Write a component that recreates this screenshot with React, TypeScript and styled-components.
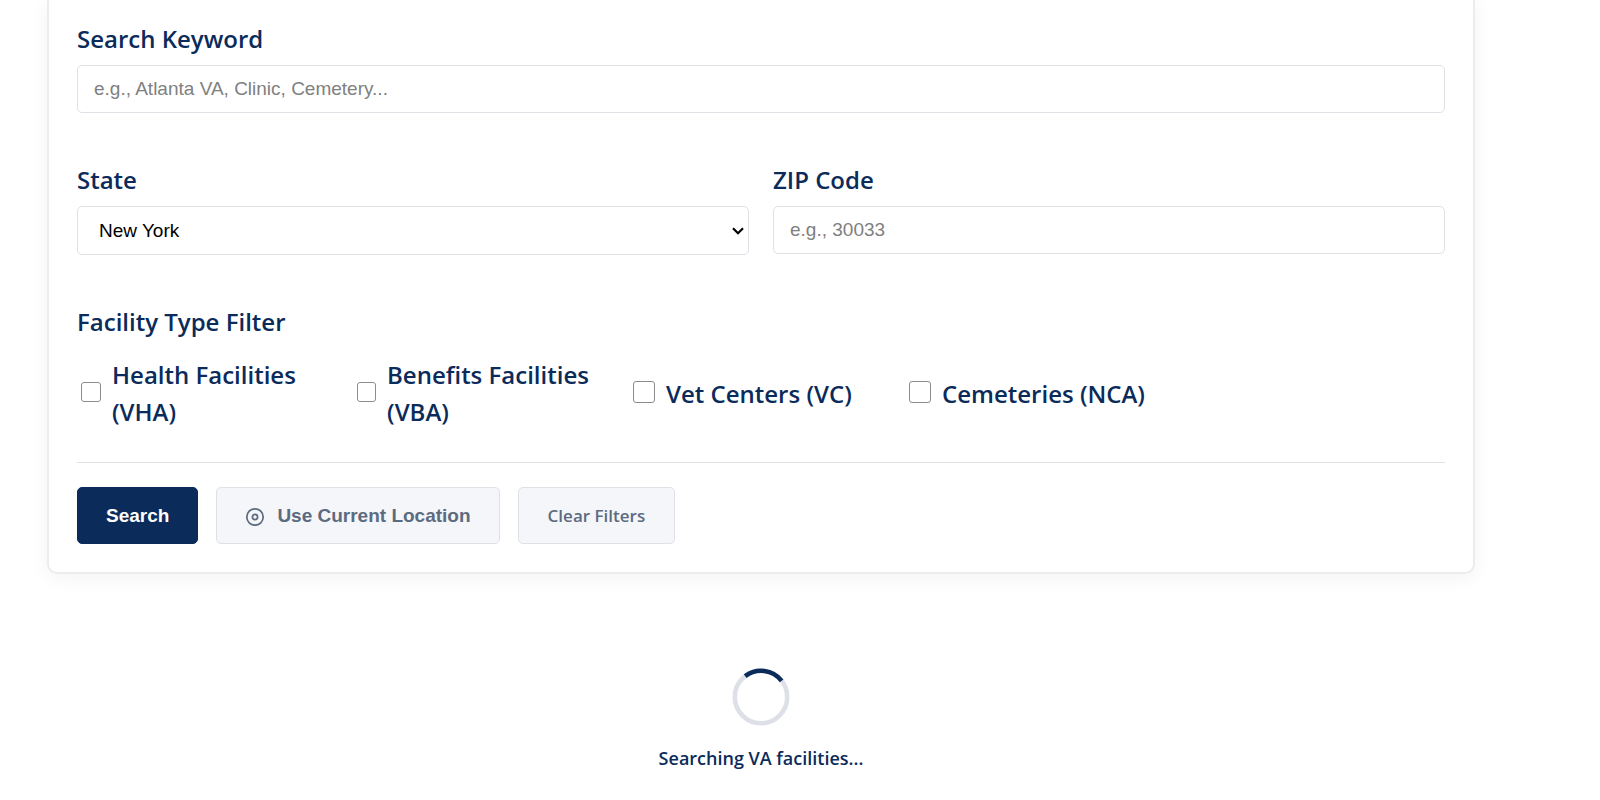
import React from "react";
import styled, { createGlobalStyle } from "styled-components";

const navy = "#0b2b5a";
const line = "#dfe1e7";
const slate = "#5b6b80";
const uiFont = '"Segoe UI", "Open Sans", "Noto Sans", sans-serif';
const controlFont = '"Liberation Sans", Arial, sans-serif';

const GlobalStyle = createGlobalStyle`
  *, *::before, *::after { box-sizing: border-box; }
  body { margin: 0; background: #fff; color: ${navy}; font-family: ${uiFont}; }
`;

const Page = styled.main`
  padding: 0 125px 0 47px;
`;

const SearchCard = styled.form`
  display: flex;
  flex-direction: column;
  padding: 20px 28px 28px;
  border: 2px solid #ececee;
  border-top: 0;
  border-radius: 0 0 10px 10px;
  box-shadow: 0 4px 20px rgba(0, 0, 0, 0.05);
`;

const FieldRow = styled.div`
  display: grid;
  grid-template-columns: repeat(${(p: { $columns: number }) => p.$columns}, minmax(0, 1fr));
  align-items: start;
  gap: 24px;
  margin-bottom: 48px;
`;

const Field = styled.div`
  display: flex;
  flex-direction: column;
  gap: 8px;
`;

const Label = styled.label`
  font-size: 24px;
  font-weight: 600;
  line-height: 37px;
`;

const TextInput = styled.input`
  width: 100%;
  height: 48px;
  padding: 0 16px;
  border: 1px solid ${line};
  border-radius: 5px;
  background: #fff;
  color: #000;
  font: 19px ${controlFont};
  &::placeholder { color: #808080; }
`;

const SelectBox = styled.div`
  position: relative;
`;

const Select = styled.select`
  appearance: none;
  display: block;
  width: 100%;
  height: 49px;
  padding: 0 32px 0 21px;
  border: 1px solid ${line};
  border-radius: 5px;
  background: #fff;
  color: #000;
  font: 19px ${controlFont};
`;

const Chevron = styled.svg`
  position: absolute;
  top: 20px;
  right: 4px;
  pointer-events: none;
`;

const FilterGroup = styled.fieldset`
  margin: 0 0 32px;
  padding: 0;
  border: 0;
  min-width: 0;
`;

const Legend = styled.legend`
  padding: 0;
  margin-bottom: 16px;
  font-size: 24px;
  font-weight: 600;
  line-height: 37px;
`;

const Options = styled.div`
  display: grid;
  grid-template-columns: repeat(auto-fill, minmax(250px, 1fr));
  gap: 12px;
`;

const Option = styled.label`
  display: flex;
  align-items: center;
  gap: 8px;
  font-size: 24px;
  font-weight: 600;
  line-height: 37px;
`;

const Checkbox = styled.input`
  appearance: none;
  width: 22px;
  min-width: 18px;
  aspect-ratio: 1;
  margin: 2px 3px 4px 4px;
  border: 1px solid #8c8c8c;
  border-radius: 3px;
  background: #fff;
  &:checked { background: ${navy}; box-shadow: inset 0 0 0 3px #fff; }
`;

const Actions = styled.div`
  display: flex;
  gap: 18px;
  padding-top: 24px;
  border-top: 1px solid ${line};
`;

const Button = styled.button<{ $primary?: boolean; $plain?: boolean }>`
  display: inline-flex;
  align-items: center;
  gap: 12px;
  height: 57px;
  padding: 0 ${(p) => (p.$plain ? 29 : 28)}px;
  border: 1px solid ${(p) => (p.$primary ? navy : line)};
  border-radius: 5px;
  background: ${(p) => (p.$primary ? navy : "#f5f6f9")};
  color: ${(p) => (p.$primary ? "#fff" : slate)};
  font-family: ${(p) => (p.$plain ? uiFont : controlFont)};
  font-size: ${(p) => (p.$plain ? 17 : 19)}px;
  font-weight: ${(p) => (p.$plain ? 600 : 700)};
  cursor: pointer;
`;

const Status = styled.div`
  display: flex;
  flex-direction: column;
  align-items: center;
  gap: 19px;
  padding: 94px 0 28px;
  font-size: 18px;
  font-weight: 600;
  line-height: 27px;
`;

const facilityTypes = [
  "Health Facilities (VHA)",
  "Benefits Facilities (VBA)",
  "Vet Centers (VC)",
  "Cemeteries (NCA)",
];

const LocationIcon = () => (
  <svg width="20" height="20" viewBox="0 0 20 20" fill="none" stroke="currentColor" aria-hidden="true">
    <circle cx="10" cy="11" r="8.2" strokeWidth="1.7" />
    <circle cx="10" cy="11" r="2.6" strokeWidth="1.7" />
  </svg>
);

const Spinner = () => (
  <svg width="58" height="58" viewBox="0 0 58 58" fill="none" strokeWidth="4.6" aria-hidden="true">
    <circle cx="29" cy="29" r="26.2" stroke="#dde0e6" />
    <path d="M13.2 8.1A26.2 26.2 0 0 1 49.6 12.8" stroke={navy} />
  </svg>
);

export default function App() {
  return (
    <>
      <GlobalStyle />
      <Page>
        <SearchCard onSubmit={(e) => e.preventDefault()}>
          <FieldRow $columns={1}>
            <Field>
              <Label htmlFor="keyword">Search Keyword</Label>
              <TextInput id="keyword" type="text" placeholder="e.g., Atlanta VA, Clinic, Cemetery..." />
            </Field>
          </FieldRow>
          <FieldRow $columns={2}>
            <Field>
              <Label htmlFor="state">State</Label>
              <SelectBox>
                <Select id="state" defaultValue="NY">
                  <option value="NY">New York</option>
                </Select>
                <Chevron width="14" height="10" viewBox="0 0 14 10" fill="none" stroke="#000" strokeWidth="2.2" aria-hidden="true">
                  <path d="M2 2.2L7 7.2L12 2.2" />
                </Chevron>
              </SelectBox>
            </Field>
            <Field>
              <Label htmlFor="zip">ZIP Code</Label>
              <TextInput id="zip" type="text" placeholder="e.g., 30033" />
            </Field>
          </FieldRow>
          <FilterGroup>
            <Legend>Facility Type Filter</Legend>
            <Options>
              {facilityTypes.map((name) => (
                <Option key={name}>
                  <Checkbox type="checkbox" />
                  <span>{name}</span>
                </Option>
              ))}
            </Options>
          </FilterGroup>
          <Actions>
            <Button $primary type="submit">Search</Button>
            <Button type="button">
              <LocationIcon />
              Use Current Location
            </Button>
            <Button $plain type="reset">Clear Filters</Button>
          </Actions>
        </SearchCard>
        <Status role="status">
          <Spinner />
          <span>Searching VA facilities...</span>
        </Status>
      </Page>
    </>
  );
}
